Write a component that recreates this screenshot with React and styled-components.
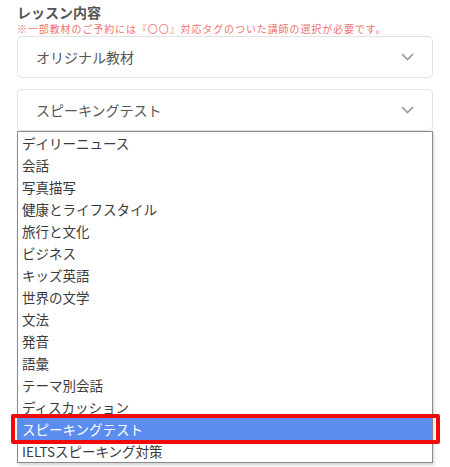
import styled, { createGlobalStyle } from "styled-components";

const GlobalStyle = createGlobalStyle`
  body {
    margin: 0;
    background: #ffffff;
    font-family: "Noto Sans CJK JP", "Noto Sans", sans-serif;
  }
`;

const options = [
  "デイリーニュース",
  "会話",
  "写真描写",
  "健康とライフスタイル",
  "旅行と文化",
  "ビジネス",
  "キッズ英語",
  "世界の文学",
  "文法",
  "発音",
  "語彙",
  "テーマ別会話",
  "ディスカッション",
  "スピーキングテスト",
  "IELTSスピーキング対策",
];

const Page = styled.div`
  width: 450px;
  height: 467px;
  padding: 4px 17px 0;
  box-sizing: border-box;
  overflow: hidden;
`;

const Title = styled.div`
  font-size: 14px;
  font-weight: 700;
  color: #555;
  line-height: 16px;
`;

const Note = styled.div`
  font-size: 10px;
  letter-spacing: 0.9px;
  color: #f07070;
  line-height: 12px;
  margin-top: 3px;
  margin-bottom: 1px;
`;

const Field = styled.div`
  position: relative;
  margin-bottom: ${(p) => (p.$last ? "0" : "11px")};
`;

const SelectBox = styled.div`
  height: 42px;
  box-sizing: border-box;
  border: 1px solid #e2e2e2;
  border-radius: 5px;
  display: flex;
  align-items: center;
  justify-content: space-between;
  padding: 0 18px 0 18px;
  font-size: 14px;
  color: #555;
`;

const Chevron = () => (
  <svg width="13" height="8" viewBox="0 0 13 8">
    <polyline points="1,1 6.5,6.5 12,1" fill="none" stroke="#9a9a9a" strokeWidth="1.7" />
  </svg>
);

const List = styled.div`
  position: absolute;
  top: 100%;
  left: 0;
  right: 0;
  background: #fff;
  border: 1px solid #8a8a8a;
  box-shadow: 1px 2px 3px rgba(0, 0, 0, 0.18);
  padding: 0;
`;

const Item = styled.div`
  position: relative;
  height: 22px;
  line-height: 22px;
  padding-left: 4px;
  font-size: 13.5px;
  color: ${(p) => (p.$selected ? "#ffffff" : "#3a3a3a")};
  background: ${(p) => (p.$selected ? "#5b8df0" : "transparent")};
  white-space: nowrap;

  ${(p) =>
    p.$selected &&
    `
    &::after {
      content: "";
      position: absolute;
      top: -4px;
      bottom: -4px;
      left: -7px;
      right: -8px;
      border: 4px solid #f00a0a;
      border-radius: 2px;
    }
  `}
`;

export default function App() {
  return (
    <>
      <GlobalStyle />
      <Page>
        <Title>レッスン内容</Title>
        <Note>※一部教材のご予約には『〇〇』対応タグのついた講師の選択が必要です。</Note>
        <Field>
          <SelectBox>
            <span>オリジナル教材</span>
            <Chevron />
          </SelectBox>
        </Field>
        <Field $last>
          <SelectBox>
            <span>スピーキングテスト</span>
            <Chevron />
          </SelectBox>
          <List>
            {options.map((o) => (
              <Item key={o} $selected={o === "スピーキングテスト"}>
                {o}
              </Item>
            ))}
          </List>
        </Field>
      </Page>
    </>
  );
}
